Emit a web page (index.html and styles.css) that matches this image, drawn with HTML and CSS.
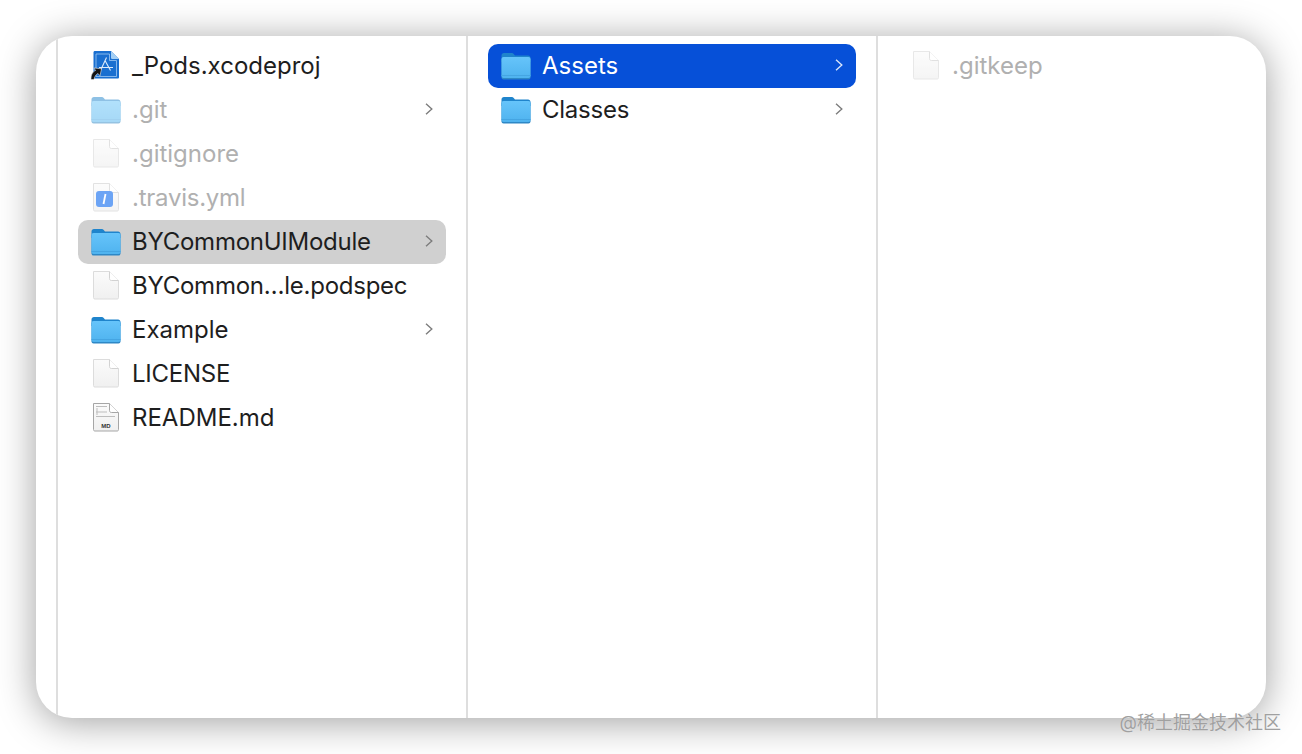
FILE: index.html
```html
<!DOCTYPE html>
<html>
	<head>
		<meta charset="UTF-8">
		<title>Finder</title>
		<link rel="stylesheet" href="styles.css">
	</head>
	<body>
		<svg class="defs" width="0" height="0">
			<defs>
				<linearGradient id="folderBody" x1="0" y1="0" x2="0" y2="1">
					<stop offset="0" stop-color="#66c4fa"/>
					<stop offset="1" stop-color="#4fb3ef"/>
				</linearGradient>
				<linearGradient id="fileBody" x1="0" y1="0" x2="0" y2="1">
					<stop offset="0" stop-color="#fbfbfb"/>
					<stop offset="1" stop-color="#f0f0f0"/>
				</linearGradient>
				<symbol id="folder" viewBox="0 0 32 32">
					<path d="M1.500 6.500C1.500 5 2.500 4 4 4h7.500c1 0 1.500.3 2.200 1l1.300 1.500h13c1.500 0 2.500 1 2.500 2.500v4H1.500z" fill="#1f84cc"/>
					<rect x="1.500" y="8.500" width="29" height="22" rx="2" fill="#2e88c6"/>
					<rect x="1.500" y="8" width="29" height="21" rx="2" fill="url(#folderBody)"/>
					<path d="M1.500 26.500h29" stroke="#45a5e2" stroke-width="1"/>
				</symbol>
				<symbol id="file" viewBox="0 0 32 32">
					<path d="M3.500 2.500h16l9 9v17c0 1-.5 1.500-1.500 1.500H5c-1 0-1.500-.5-1.500-1.500z" fill="url(#fileBody)" stroke="#dcdcdc"/>
					<path d="M19.500 2.500v7c0 1 .5 2 2 2h7" fill="#fff" stroke="#d2d2d2"/>
				</symbol>
				<symbol id="xcode" viewBox="0 0 32 32">
					<path d="M3.500 3.500c0-1 .5-1.500 1.500-1.500h16l8 8v18c0 1-.5 1.500-1.500 1.500H5c-1 0-1.500-.5-1.500-1.500z" fill="#1a6fd0"/>
					<path d="M21 2v6.500c0 1 .5 1.500 1.500 1.500H29z" fill="#a3cff5"/>
					<path d="M6 5h13.500v6.500h7v16H6z" fill="none" stroke="#a0c9f2" stroke-width=".8"/>
					<path d="M16.500 8.500l-6 13M15 11.500l5.500 10M9 18.500h14" fill="none" stroke="#dcebfb" stroke-width="1.100"/>
					<path d="M1 30.500c0-4 1-7.500 4.500-9l-1.500-2.500 7.500.8-1.500 7-2-2.300c-2 1-3.500 3-4 6z" fill="#141414" stroke="#e8e8e8" stroke-width=".6"/>
				</symbol>
				<symbol id="travis" viewBox="0 0 32 32">
					<path d="M3.500 2.500h16l9 9v17c0 1-.5 1.500-1.500 1.500H5c-1 0-1.500-.5-1.500-1.500z" fill="url(#fileBody)" stroke="#d4d4d4"/>
					<path d="M19.500 2.500v7c0 1 .5 2 2 2h7" fill="#fff" stroke="#d2d2d2"/>
					<rect x="6" y="10" width="17" height="16" rx="3" fill="#1f74f0"/>
					<path d="M15.500 13l-2 10" stroke="#fff" stroke-width="1.800"/>
				</symbol>
				<symbol id="markdown" viewBox="0 0 32 32">
					<path d="M3.500 2.500h16l9 9v17c0 1-.5 1.500-1.500 1.500H5c-1 0-1.500-.5-1.500-1.500z" fill="url(#fileBody)" stroke="#a6a6a6"/>
					<path d="M19.500 2.500v7c0 1 .5 2 2 2h7" fill="#fff" stroke="#a6a6a6"/>
					<path d="M6 5.500h11M6 11h11M6 15.500h19M7 7v7" fill="none" stroke="#bdbdbd" stroke-width="1"/>
					<text x="16" y="27" text-anchor="middle" class="md-label">MD</text>
				</symbol>
			</defs>
		</svg>

		<div class="window">
			<div class="sliver"></div>

			<div class="col">
				<div class="row">
					<svg class="ico"><use href="#xcode"/></svg>
					<span class="name">_Pods.xcodeproj</span>
				</div>
				<div class="row dim">
					<svg class="ico"><use href="#folder"/></svg>
					<span class="name">.git</span>
					<svg class="arrow" viewBox="0 0 8 12"><path d="M1 .8L6.800 6 1 11.200"/></svg>
				</div>
				<div class="row dim">
					<svg class="ico file-ico"><use href="#file"/></svg>
					<span class="name">.gitignore</span>
				</div>
				<div class="row dim">
					<svg class="ico file-ico"><use href="#travis"/></svg>
					<span class="name tight">.travis.yml</span>
				</div>
				<div class="row active-gray">
					<svg class="ico"><use href="#folder"/></svg>
					<span class="name tight">BYCommonUIModule</span>
					<svg class="arrow" viewBox="0 0 8 12"><path d="M1 .8L6.800 6 1 11.200"/></svg>
				</div>
				<div class="row">
					<svg class="ico"><use href="#file"/></svg>
					<span class="name tight">BYCommon…le.podspec</span>
				</div>
				<div class="row">
					<svg class="ico"><use href="#folder"/></svg>
					<span class="name">Example</span>
					<svg class="arrow" viewBox="0 0 8 12"><path d="M1 .8L6.800 6 1 11.200"/></svg>
				</div>
				<div class="row">
					<svg class="ico"><use href="#file"/></svg>
					<span class="name tight">LICENSE</span>
				</div>
				<div class="row">
					<svg class="ico"><use href="#markdown"/></svg>
					<span class="name">README.md</span>
				</div>
			</div>

			<div class="col">
				<div class="row active-blue">
					<svg class="ico"><use href="#folder"/></svg>
					<span class="name">Assets</span>
					<svg class="arrow" viewBox="0 0 8 12"><path d="M1 .8L6.800 6 1 11.200"/></svg>
				</div>
				<div class="row">
					<svg class="ico"><use href="#folder"/></svg>
					<span class="name tight">Classes</span>
					<svg class="arrow" viewBox="0 0 8 12"><path d="M1 .8L6.800 6 1 11.200"/></svg>
				</div>
			</div>

			<div class="col last">
				<div class="row dim">
					<svg class="ico file-ico"><use href="#file"/></svg>
					<span class="name">.gitkeep</span>
				</div>
			</div>
		</div>

		<div class="mark">@稀土掘金技术社区</div>
	</body>
</html>
```

FILE: styles.css
```css
*{
	margin: 0;
	padding: 0;
	box-sizing: border-box;
}
html,body{
	height: 100%;
	overflow: hidden;
}
body{
	background-color: white;
	padding: 36px;
	font-family: "Inter", "Noto Sans CJK SC", sans-serif;
}
.defs{
	position: absolute;
}
.md-label{
	font-family: "Liberation Sans", sans-serif;
	font-size: 6px;
	font-weight: bold;
	fill: #333;
}
.window{
	display: flex;
	height: 100%;
	background-color: white;
	border-radius: 36px;
	box-shadow: 0 4px 38px rgba(0,0,0,0.38);
	overflow: hidden;
}
.sliver{
	width: 22px;
	border-right: 2px solid #dedede;
}
.col{
	width: 410px;
	padding: 8px 20px;
	border-right: 2px solid #dedede;
}
.col.last{
	flex: 1;
	border-right: none;
}
.row{
	display: flex;
	align-items: center;
	height: 44px;
	padding: 0 13px 2px 12px;
	border-radius: 10px;
	color: #1e1e1e;
	font-size: 24px;
}
.tight{
	letter-spacing: -0.25px;
}
.ico{
	width: 32px;
	height: 32px;
	flex: none;
	margin-right: 10px;
}
.arrow{
	width: 8px;
	height: 12px;
	flex: none;
	margin-left: auto;
	fill: none;
	stroke: #7d7d7d;
	stroke-width: 1.4;
}
.dim{
	color: #b0b0b0;
}
.dim .ico{
	opacity: 0.5;
}
.dim .file-ico{
	opacity: 0.65;
}
.active-gray{
	background-color: #d0d0d0;
}
.active-blue{
	background-color: #0650d8;
	color: white;
}
.active-blue .arrow{
	stroke: #d8e4fa;
}
.mark{
	position: absolute;
	right: 21px;
	top: 710px;
	font-size: 18px;
	line-height: 26px;
	color: #a0a0a0;
	text-shadow: 0 0 1px rgba(255,255,255,0.6);
}
```
